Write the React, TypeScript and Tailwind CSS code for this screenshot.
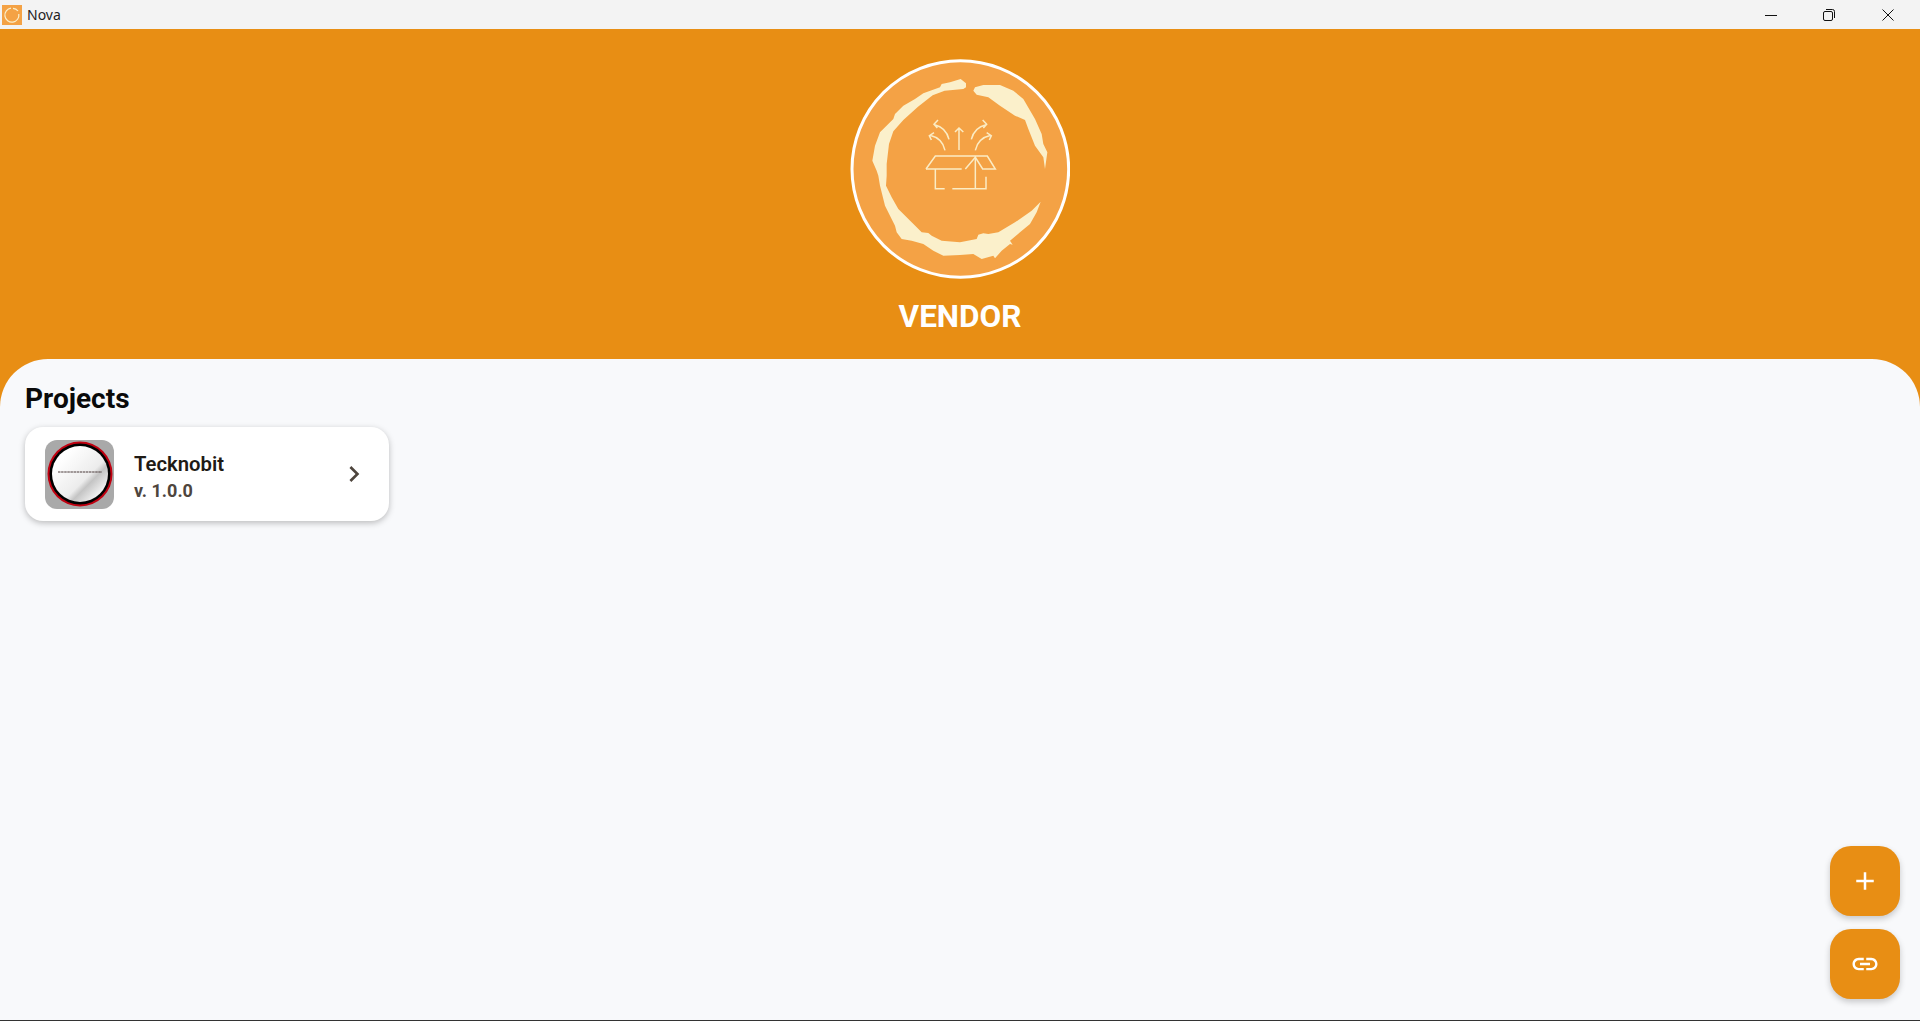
import { MdAdd, MdChevronRight, MdLink } from "react-icons/md";

const RING_PIECES = [
  // left and bottom sweep, outer edge first, then back along the inner edge
  "408,128 392,115 360,125 335,130 330,140 280,158 255,175 220,195 195,220 190,235 150,275 135,315 127,360 140,390 145,405 150,435 165,495 195,555 200,575 215,595 245,600 280,610 310,630 340,645 390,643 430,640 455,655 490,645 495,653 515,630 540,610 548,612 540,600 570,575 600,550 620,515 632,483 605,510 555,545 505,575 475,580 460,578 445,582 440,595 390,605 335,600 305,585 295,577 275,575 245,545 205,505 185,470 168,435 170,405 170,370 177,310 190,272 220,238 264,198 308,164 344,150 400,145 408,140",
  "430,150 435,140 460,133 510,133 550,150 580,175 615,235 635,280 640,310 652,335 645,385 640,350 615,315 595,265 585,238 555,225 510,195 475,170 440,162",
];

const BOX_LINES = [
  "M288 385 L316 346 L472 346 L496 385 L458 385 L436 350 L406 385",
  "M288 385 H395",
  "M316 385 V444 H344",
  "M367 444 H468 V408",
  "M436 350 V444",
  "M387 328 V264 M375 274 L387 262 L400 274",
  "M345 329 C340 305 325 290 300 284 M312 276 L298 285 L304 298",
  "M357 296 C352 275 338 258 314 252 M324 238 L312 251 L322 262",
  "M436 329 C441 305 456 290 482 284 M470 276 L484 285 L478 298",
  "M424 296 C429 275 443 258 468 252 M458 238 L470 251 L460 262",
];

function VendorLogo() {
  return (
    <svg width="220" height="220" viewBox="60 55 660 660">
      <circle cx="391" cy="385" r="325" fill="#f4a245" stroke="#ffffff" strokeWidth="9" />
      {RING_PIECES.map((points) => (
        <polygon key={points} points={points} fill="#fbf0cb" />
      ))}
      {BOX_LINES.map((d) => (
        <path key={d} d={d} fill="none" stroke="#fbecc4" strokeWidth="4.5" />
      ))}
    </svg>
  );
}

function AppIcon() {
  return (
    <svg width="20" height="20" viewBox="0 0 20 20">
      <rect width="20" height="20" fill="#f4a245" />
      <path d="M9 3.2 A7 7 0 1 0 16.8 9 M11 3.3 A7 7 0 0 1 16 6" fill="none" stroke="#fbf0cb" strokeWidth="1.2" />
    </svg>
  );
}

function ProjectThumb() {
  return (
    <div className="w-[69px] h-[69px] rounded-xl bg-[#a9a9a9] flex items-center justify-center overflow-hidden shrink-0">
      <svg width="66" height="66" viewBox="0 0 66 66">
        <defs>
          <linearGradient id="thumb" x1="0.2" y1="0.2" x2="0.85" y2="0.85">
            <stop offset="0" stopColor="#ffffff" />
            <stop offset="0.6" stopColor="#ececec" />
            <stop offset="0.72" stopColor="#c4c4c4" />
            <stop offset="1" stopColor="#f2f2f2" />
          </linearGradient>
        </defs>
        <circle cx="33" cy="33" r="32.5" fill="#c00010" />
        <circle cx="33" cy="33" r="30.5" fill="#000000" />
        <circle cx="33" cy="33" r="28" fill="url(#thumb)" />
        <path d="M11 31 H55" stroke="#4a3a3a" strokeWidth="1.2" strokeDasharray="2.5 0.6" />
      </svg>
    </div>
  );
}

function WindowControls() {
  return (
    <div className="flex pr-[3px]">
      <button className="w-[57px] h-[29px] flex items-center justify-center">
        <svg width="12" height="12" viewBox="0 0 12 12">
          <path d="M0 6.5 H12" stroke="#111111" strokeWidth="1" />
        </svg>
      </button>
      <button className="w-[60px] h-[29px] flex items-center justify-center">
        <svg width="12" height="12" viewBox="0 0 12 12" fill="none" stroke="#111111" strokeWidth="1">
          <rect x="0.5" y="2.5" width="9" height="9" rx="1.5" />
          <path d="M3 0.5 H9.5 A2 2 0 0 1 11.5 2.5 V9" />
        </svg>
      </button>
      <button className="w-[58px] h-[29px] flex items-center justify-center">
        <svg width="12" height="12" viewBox="0 0 12 12">
          <path d="M0.5 0.5 L11.5 11.5 M11.5 0.5 L0.5 11.5" stroke="#111111" strokeWidth="1" />
        </svg>
      </button>
    </div>
  );
}

export default function App() {
  return (
    <div className="h-[1021px] flex flex-col bg-[#e88e14] border-b border-[#333333] overflow-hidden font-['Roboto',sans-serif]">
      {/* title bar */}
      <div className="h-[29px] shrink-0 bg-[#f3f3f3] flex items-center justify-between">
        <div className="flex items-center pl-[2px]">
          <AppIcon />
          <span className="ml-[5px] text-[14px] text-[#222222] font-['Noto_Sans',sans-serif]">Nova</span>
        </div>
        <WindowControls />
      </div>

      {/* header */}
      <div className="h-[330px] shrink-0 flex flex-col items-center pt-[30px]">
        <VendorLogo />
        <h1 className="mt-[20px] text-[31.5px] leading-[36px] font-bold text-white">VENDOR</h1>
      </div>

      {/* projects */}
      <div className="relative flex-1 bg-[#f8f9fb] rounded-t-[48px] px-[25px] pt-[22px]">
        <h2 className="text-[28px] leading-[36px] font-bold text-[#0a0a0a]">Projects</h2>
        <div className="mt-[10px] w-[364px] h-[94px] rounded-[18px] bg-white shadow-[0_2px_6px_rgba(0,0,0,0.25)] flex items-center pl-[20px] pr-[19px]">
          <ProjectThumb />
          <div className="ml-[20px] mt-[6px] flex-1">
            <div className="text-[20.3px] leading-[28px] font-semibold text-[#1f1b16]">Tecknobit</div>
            <div className="text-[18px] leading-[26px] font-bold text-[#4e453d]">v. 1.0.0</div>
          </div>
          <MdChevronRight size={32} color="#4e453d" />
        </div>

        <div className="absolute right-[20px] bottom-[21px] flex flex-col gap-[13px]">
          <button className="w-[70px] h-[70px] rounded-[21px] bg-[#e88e14] text-white flex items-center justify-center shadow-[0_3px_6px_rgba(0,0,0,0.2)]">
            <MdAdd size={30} />
          </button>
          <button className="w-[70px] h-[70px] rounded-[21px] bg-[#e88e14] text-white flex items-center justify-center shadow-[0_3px_6px_rgba(0,0,0,0.2)]">
            <MdLink size={30} />
          </button>
        </div>
      </div>
    </div>
  );
}
